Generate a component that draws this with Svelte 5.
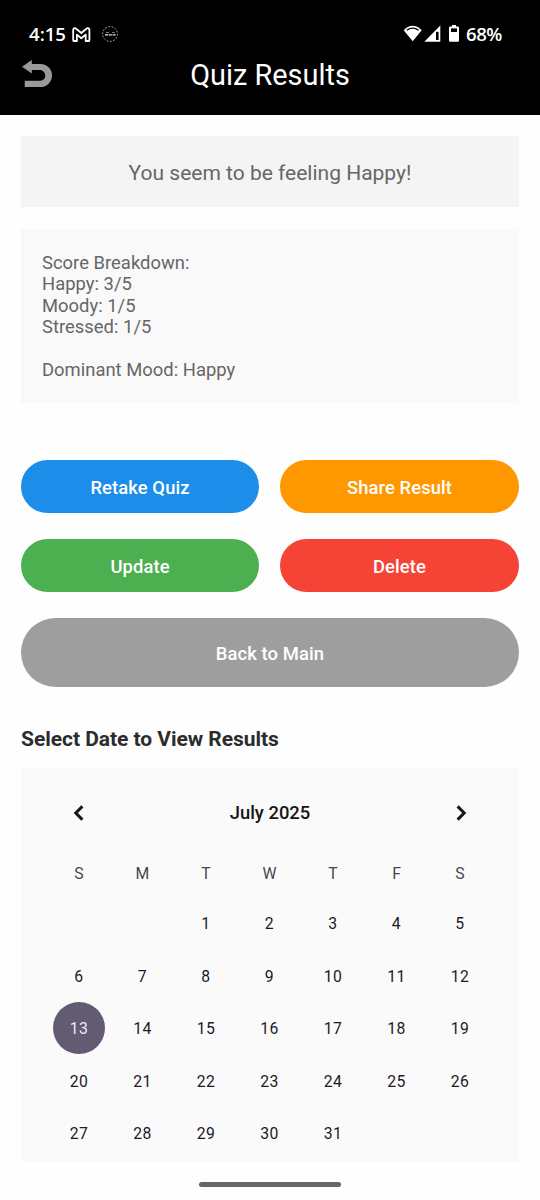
<script>
  const weekdays = ['S', 'M', 'T', 'W', 'T', 'F', 'S'];
  const firstWeekday = 2;
  const days = [...Array(firstWeekday).fill(null), ...Array.from({ length: 31 }, (_, i) => i + 1)];
  let selected = $state(13);
</script>

<div class="screen">
  <header>
    <div class="status">
      <span class="clock">4:15</span>
      <svg class="mail" width="20" height="16" viewBox="0 0 20 16" aria-hidden="true">
        <path d="M1.2 13.3V3.2Q1.2 1.2 2.7 1.2Q3.6 1.2 4.5 2L9.3 6L14.1 2Q15 1.2 15.9 1.2Q17.4 1.2 17.4 3.2V13.3Q17.4 14 16.8 14H13.7V7.6L9.3 11.2L4.9 7.6V14H1.8Q1.2 14 1.2 13.3Z" fill="none" stroke="#fff" stroke-width="1.8" stroke-linejoin="round" />
      </svg>
      <svg class="face" width="18" height="18" viewBox="0 0 18 18" aria-hidden="true">
        <circle cx="9" cy="9" r="7.4" fill="none" stroke="#bbb" stroke-width="1" stroke-dasharray="1.6 1.7" />
        <path d="M5 7.5H8M11 7.5H14" stroke="#777" stroke-width="1" />
        <path d="M4 9.8H14.5" stroke="#eee" stroke-width="1.3" stroke-dasharray="3 .8" />
      </svg>
      <span class="spacer"></span>
      <svg class="signals" width="60" height="20" viewBox="0 0 60 20" aria-hidden="true">
        <path d="M.7 6.2Q9.7 -2.6 18.7 6.2L9.7 17.2Z" fill="#fff" />
        <path d="M3.8 6.2Q9.7 2 15.6 6.2" fill="none" stroke="#000" stroke-width="1.4" />
        <path d="M21.3 17.8L37.3 1.5V17.8Z" fill="#fff" />
        <path d="M33 7.8H35.6V16H33Z" fill="#000" />
        <path d="M49 1H53V2.5H55Q56 2.5 56 3.5V16.7Q56 17.7 55 17.7H47Q46 17.7 46 16.7V3.5Q46 2.5 47 2.5H49Z" fill="#fff" />
        <path d="M48 4.4H54V8H48Z" fill="#000" />
      </svg>
      <span class="percent">68%</span>
    </div>
    <div class="titlebar">
      <button class="back" aria-label="Back">
        <svg width="32" height="30" viewBox="0 0 32 30" aria-hidden="true">
          <path d="M0 8.8L9.8 2V6H18.5A11.2 11.2 0 0 1 18.5 29H2.7V22.7H18A5.3 5.3 0 0 0 18 12.1H9.8V15.6Z" fill="#999" />
        </svg>
      </button>
      <h1>Quiz Results</h1>
    </div>
  </header>

  <main>
    <p class="mood">You seem to be feeling Happy!</p>

    <section class="scores">
      <div>Score Breakdown:</div>
      <div>Happy: 3/5</div>
      <div>Moody: 1/5</div>
      <div>Stressed: 1/5</div>
      <div class="dominant">Dominant Mood: Happy</div>
    </section>

    <div class="actions">
      <button class="retake">Retake Quiz</button>
      <button class="share">Share Result</button>
      <button class="update">Update</button>
      <button class="delete">Delete</button>
      <button class="main">Back to Main</button>
    </div>

    <h2>Select Date to View Results</h2>

    <section class="calendar">
      <div class="month">
        <button aria-label="Previous month">
          <svg width="12" height="18" viewBox="0 0 12 18" aria-hidden="true"><path d="M9.4 2.4L2.8 9L9.4 15.6" /></svg>
        </button>
        <span>July 2025</span>
        <button aria-label="Next month">
          <svg width="12" height="18" viewBox="0 0 12 18" aria-hidden="true"><path d="M2.6 2.4L9.2 9L2.6 15.6" /></svg>
        </button>
      </div>
      <div class="grid weekdays">
        {#each weekdays as name}<span>{name}</span>{/each}
      </div>
      <div class="grid days">
        {#each days as day}
          {#if day}
            <button class:selected={day === selected} onclick={() => (selected = day)}>{day}</button>
          {:else}
            <span></span>
          {/if}
        {/each}
      </div>
    </section>
  </main>
  <div class="handle"></div>
</div>

<style>
  :global(body) { margin: 0; background: #fff; }
  .screen {
    box-sizing: border-box;
    width: 540px;
    height: 1200px;
    overflow: hidden;
    display: flex;
    flex-direction: column;
    background: #fefefe;
    font-family: Roboto, sans-serif;
  }
  button { font: inherit; border: 0; padding: 0; background: none; cursor: pointer; }
  h1, h2, p { margin: 0; }
  svg { display: block; }

  header { height: 115px; background: #000; color: #fff; flex: none; }
  .status { display: flex; align-items: center; height: 20px; padding: 24px 38px 0 29px; font-family: "Open Sans", sans-serif; font-weight: 600; font-size: 18.6px; line-height: 18px; }
  .status span { margin-top: -1px; }
  .clock { width: 43px; }
  .percent { width: 36px; letter-spacing: -.5px; white-space: nowrap; }
  .mail { margin-top: 1px; }
  .face { margin-left: 9px; }
  .spacer { flex: 1; }
  .signals { margin-right: 3px; }
  .titlebar { display: grid; grid-template-columns: 32px 1fr 32px; padding: 14px 22px 0; height: 34px; align-items: center; }
  .back { height: 34px; }
  .back svg { margin-bottom: 4px; }
  h1 { font-size: 28.9px; font-weight: 400; text-align: center; line-height: 34px; }

  main { padding: 21px 21px 0; }
  .mood { height: 71px; line-height: 74px; background: #f4f4f4; color: #666; font-size: 21px; text-align: center; }
  .scores { box-sizing: border-box; margin-top: 22px; height: 174px; padding: 22.8px 21px; background: #f9f9f9; color: #666; font-size: 18.4px; line-height: 21.5px; }
  .scores div { letter-spacing: .02px; }
  .dominant { margin-top: 21.5px; }

  .actions { display: grid; grid-template-columns: 238px 239px; column-gap: 21px; row-gap: 26px; margin-top: 57px; }
  .actions button { box-sizing: border-box; height: 53px; padding-top: 2px; border-radius: 35px; color: #fff; font-weight: 500; font-size: 18.4px; letter-spacing: .1px; line-height: 51px; }
  .actions .retake { background: #1c8de8; }
  .actions .share { background: #ff9800; }
  .actions .update { background: #4caf50; }
  .actions .delete { background: #f54336; }
  .actions .main { grid-column: 1 / 3; height: 69px; line-height: 67px; background: #9e9e9e; }

  h2 { margin-top: 40px; font-size: 21px; line-height: 24px; font-weight: 700; letter-spacing: -.04px; color: #2c2c2c; }

  .calendar { box-sizing: border-box; margin-top: 17px; height: 394px; padding: 24px 26px 0; background: #fafafa; color: #1c1b1f; }
  .month { display: flex; justify-content: space-between; align-items: center; height: 42px; padding: 0 26px; font-size: 18.4px; font-weight: 500; color: #161616; }
  .month span { margin-top: -2px; }
  .month path { fill: none; stroke: #161616; stroke-width: 3; }
  .grid { display: grid; grid-template-columns: repeat(7, 63.5px); justify-content: center; margin-left: -1px; font-size: 15.75px; }
  .weekdays { margin-top: 26px; height: 28px; line-height: 28px; color: #49454f; text-align: center; }
  .days { margin-top: 9px; grid-auto-rows: 52.5px; justify-items: center; }
  .days button { width: 52px; height: 52px; padding-top: 1px; border-radius: 50%; color: #1c1b1f; line-height: 51px; letter-spacing: .4px; }
  .days .selected { background: #625b71; color: #eee8f4; }

  .handle { width: 142px; height: 5px; margin: 20px auto 0; border-radius: 3px; background: #666; }
</style>
